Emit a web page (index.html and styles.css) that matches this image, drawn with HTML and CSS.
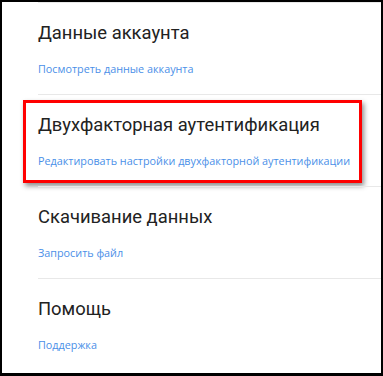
FILE: index.html
```html
<!DOCTYPE html>
<html lang="ru">
<head>
  <meta charset="UTF-8">
  <meta name="viewport" content="width=device-width, initial-scale=1.0">
  <title>Настройки аккаунта</title>
  <link rel="stylesheet" href="styles.css">
</head>
<body>
  <div class="panel">
    <div class="section">
      <h2>Данные аккаунта</h2>
      <a href="#">Посмотреть данные аккаунта</a>
    </div>
    <div class="section marked">
      <h2>Двухфакторная аутентификация</h2>
      <a href="#">Редактировать настройки двухфакторной аутентификации</a>
      <div class="highlight"></div>
    </div>
    <div class="section">
      <h2>Скачивание данных</h2>
      <a href="#">Запросить файл</a>
    </div>
    <div class="section">
      <h2>Помощь</h2>
      <a href="#">Поддержка</a>
    </div>
  </div>
</body>
</html>
```

FILE: styles.css
```css
body {
  margin: 0;
  background-color: #000;
  height: 376px;
  padding: 2px 2px 3px 2px;
  box-sizing: border-box;
  font-family: 'Open Sans', 'Noto Sans', sans-serif;
}

.panel {
  background-color: #fff;
  height: 100%;
  overflow: hidden;
}

.section {
  position: relative;
  margin-left: 36px;
  height: 92px;
  box-sizing: border-box;
  border-top: 1px solid #e8e8e8;
  padding-top: 16px;
}

.section h2 {
  margin: 0;
  font-family: Roboto, 'Noto Sans', sans-serif;
  font-size: 18.4px;
  font-weight: 400;
  line-height: 28px;
  color: #222;
}

.section a {
  display: block;
  margin-top: 14px;
  font-size: 10.8px;
  line-height: 16px;
  color: #4a8fe8;
  text-decoration: none;
}

/* красная рамка поверх блока */
.highlight {
  position: absolute;
  top: 5px;
  left: -15px;
  width: 339px;
  height: 83px;
  box-sizing: border-box;
  border: 3px solid #f00;
  box-shadow: 2px 3px 5px rgba(0, 0, 0, 0.45);
}
```
